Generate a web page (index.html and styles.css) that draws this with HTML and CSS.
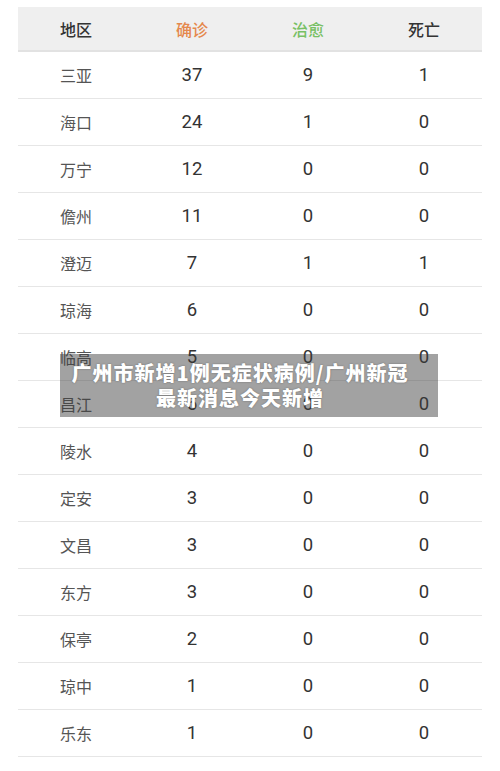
FILE: index.html
```html
<!DOCTYPE html>
<html lang="zh-CN">
<head>
<meta charset="utf-8">
<title>海南疫情数据</title>
<link rel="stylesheet" href="styles.css">
</head>
<body>
<div class="page">
  <div class="table">
    <div class="row head">
      <div class="cell name">地区</div>
      <div class="cell confirmed">确诊</div>
      <div class="cell cured">治愈</div>
      <div class="cell dead">死亡</div>
    </div>
    <div class="row"><div class="cell name">三亚</div><div class="cell num">37</div><div class="cell num">9</div><div class="cell num">1</div></div>
    <div class="row"><div class="cell name">海口</div><div class="cell num">24</div><div class="cell num">1</div><div class="cell num">0</div></div>
    <div class="row"><div class="cell name">万宁</div><div class="cell num">12</div><div class="cell num">0</div><div class="cell num">0</div></div>
    <div class="row"><div class="cell name">儋州</div><div class="cell num">11</div><div class="cell num">0</div><div class="cell num">0</div></div>
    <div class="row"><div class="cell name">澄迈</div><div class="cell num">7</div><div class="cell num">1</div><div class="cell num">1</div></div>
    <div class="row"><div class="cell name">琼海</div><div class="cell num">6</div><div class="cell num">0</div><div class="cell num">0</div></div>
    <div class="row"><div class="cell name">临高</div><div class="cell num">5</div><div class="cell num">0</div><div class="cell num">0</div></div>
    <div class="row"><div class="cell name">昌江</div><div class="cell num">5</div><div class="cell num">0</div><div class="cell num">0</div></div>
    <div class="row"><div class="cell name">陵水</div><div class="cell num">4</div><div class="cell num">0</div><div class="cell num">0</div></div>
    <div class="row"><div class="cell name">定安</div><div class="cell num">3</div><div class="cell num">0</div><div class="cell num">0</div></div>
    <div class="row"><div class="cell name">文昌</div><div class="cell num">3</div><div class="cell num">0</div><div class="cell num">0</div></div>
    <div class="row"><div class="cell name">东方</div><div class="cell num">3</div><div class="cell num">0</div><div class="cell num">0</div></div>
    <div class="row"><div class="cell name">保亭</div><div class="cell num">2</div><div class="cell num">0</div><div class="cell num">0</div></div>
    <div class="row"><div class="cell name">琼中</div><div class="cell num">1</div><div class="cell num">0</div><div class="cell num">0</div></div>
    <div class="row"><div class="cell name">乐东</div><div class="cell num">1</div><div class="cell num">0</div><div class="cell num">0</div></div>
  </div>
  <div class="caption">广州市新增1例无症状病例/广州新冠<br>最新消息今天新增</div>
</div>
</body>
</html>
```

FILE: styles.css
```css
html, body {
  margin: 0;
  padding: 0;
  background: #ffffff;
}

.page {
  position: relative;
  width: 500px;
  height: 771px;
  overflow: hidden;
  padding-top: 7px;
  box-sizing: border-box;
  font-family: "Noto Sans CJK SC", "Noto Sans", sans-serif;
}

.table {
  margin: 0 18px;
}

.row {
  display: grid;
  grid-template-columns: repeat(4, 1fr);
  height: 47px;
  align-items: center;
  border-bottom: 1px solid #e6e6e6;
  box-sizing: border-box;
}

.row.head {
  height: 45px;
  background: #efefef;
  border-bottom: 2px solid #e2e2e2;
  font-weight: 500;
  font-size: 16px;
}

.cell {
  text-align: center;
}

.name {
  font-size: 16px;
  color: #555555;
}

.head .name,
.head .dead {
  color: #333333;
}

.head .confirmed {
  color: #e5884c;
}

.head .cured {
  color: #77c064;
}

.num {
  font-family: Roboto, "Liberation Sans", sans-serif;
  font-size: 18.5px;
  font-weight: 400;
  color: #333333;
}

.caption {
  position: absolute;
  left: 60px;
  top: 354px;
  width: 378px;
  height: 63px;
  box-sizing: border-box;
  padding: 6px 18px 0 0;
  background: rgba(60, 60, 60, 0.48);
  color: #ffffff;
  font-family: "Noto Sans CJK SC", sans-serif;
  font-weight: 900;
  font-size: 20px;
  letter-spacing: 1px;
  line-height: 25px;
  text-align: center;
  text-shadow: 0 0 2px rgba(0, 0, 0, 0.35);
}
```
